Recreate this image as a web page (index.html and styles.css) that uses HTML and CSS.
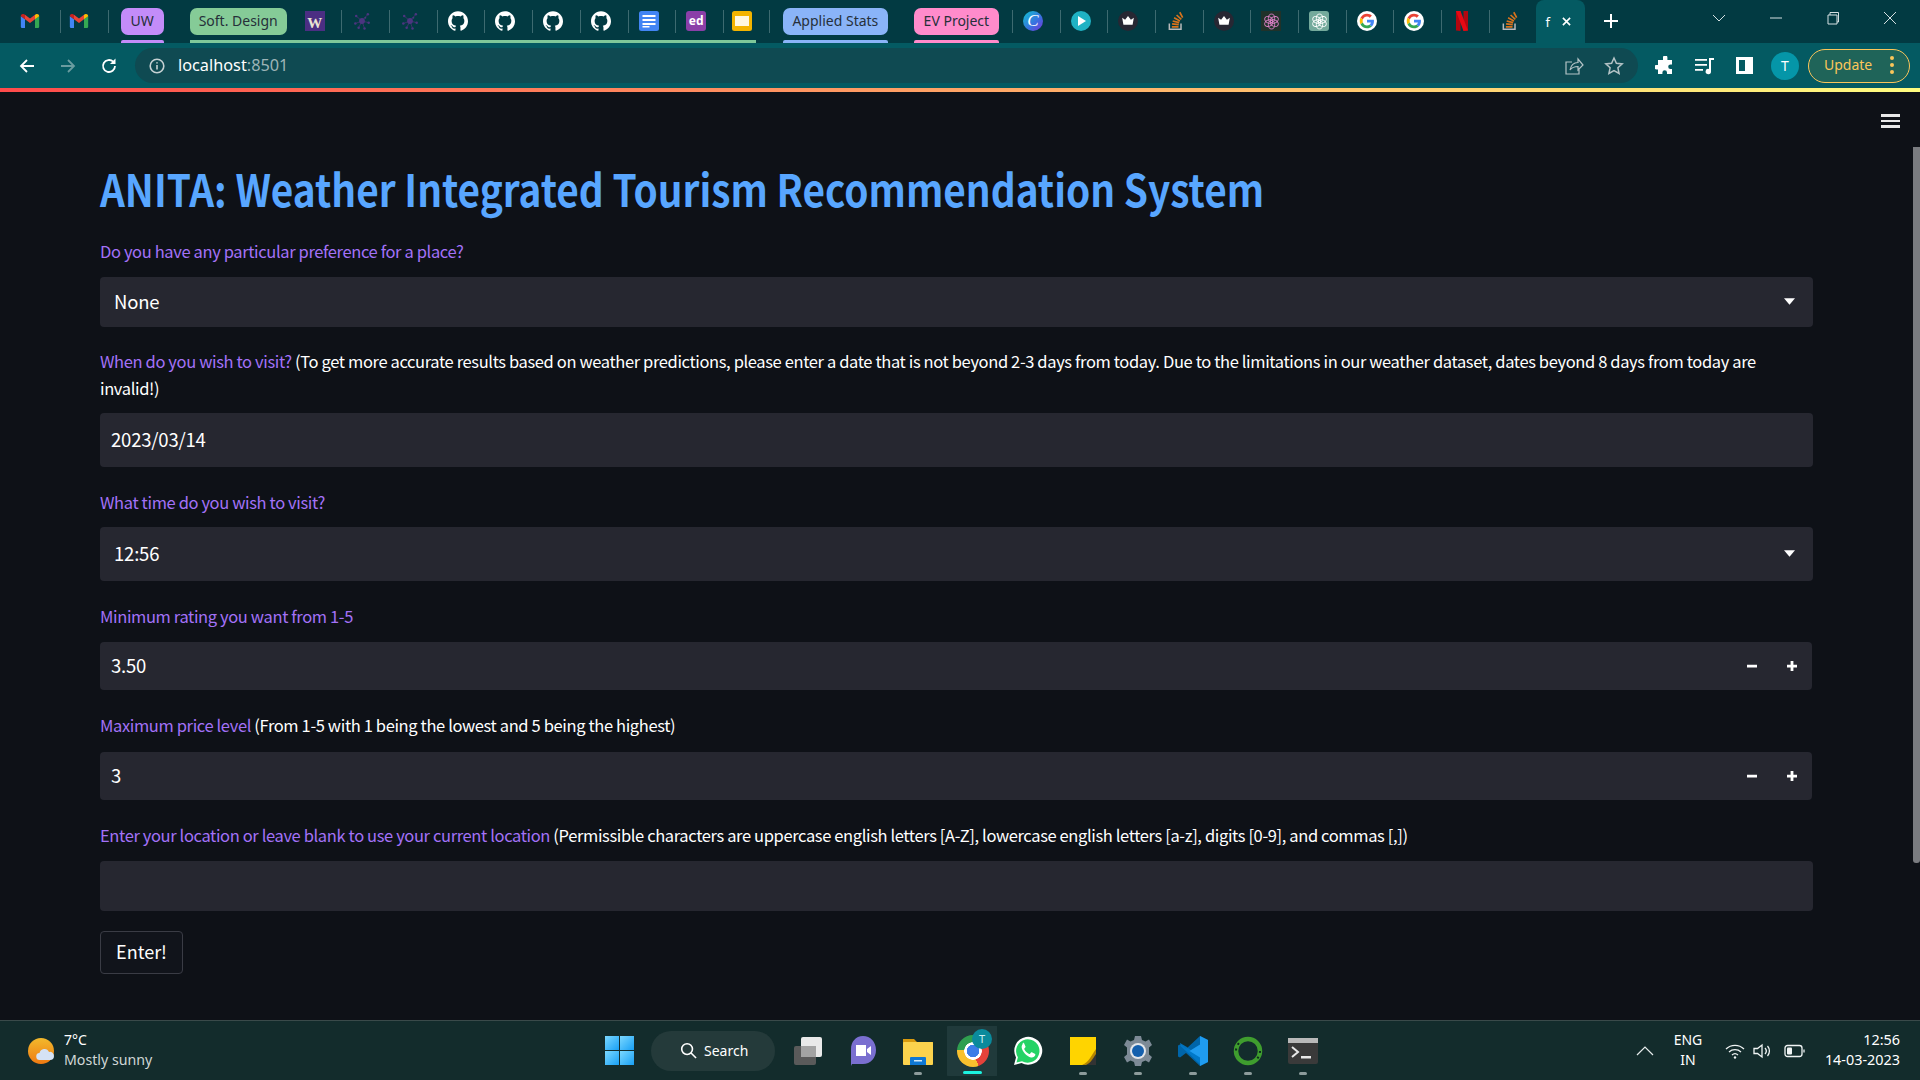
FILE: index.html
```html
<!DOCTYPE html>
<html lang="en">
<head>
    <meta charset="UTF-8">
    <title>ANITA</title>
    <link rel="stylesheet" href="styles.css">
</head>
<body>
    <svg class="defs" width="0" height="0">
        <symbol id="gmail" viewBox="0 0 24 24">
            <path fill="#4285f4" d="M1 6v13a1.500 1.500 0 0 0 1.500 1.500H6V10z"/>
            <path fill="#34a853" d="M23 6v13a1.500 1.500 0 0 1-1.500 1.500H18V10z"/>
            <path fill="#ea4335" d="M6 10l6 4.500L18 10V4.500l-6 4.500L6 4.500z"/>
            <path fill="#fbbc04" d="M18 4.500V10l5-3.700V6c0-2-2.300-3.100-3.800-2z"/>
            <path fill="#c5221f" d="M6 4.500V10L1 6.300V6c0-2 2.300-3.100 3.800-2z"/>
        </symbol>
        <symbol id="github" viewBox="0 0 24 24">
            <path fill="#fff" d="M12 .297c-6.630 0-12 5.373-12 12 0 5.303 3.438 9.800 8.205 11.385.6.113.82-.258.82-.577 0-.285-.01-1.040-.015-2.040-3.338.724-4.042-1.610-4.042-1.610C4.422 18.070 3.633 17.700 3.633 17.700c-1.087-.744.084-.729.084-.729 1.205.084 1.838 1.236 1.838 1.236 1.070 1.835 2.809 1.305 3.495.998.108-.776.417-1.305.76-1.605-2.665-.3-5.466-1.332-5.466-5.930 0-1.310.465-2.380 1.235-3.220-.135-.303-.54-1.523.105-3.176 0 0 1.005-.322 3.300 1.230.96-.267 1.980-.399 3-.405 1.020.006 2.040.138 3 .405 2.280-1.552 3.285-1.230 3.285-1.230.645 1.653.24 2.873.12 3.176.765.84 1.230 1.910 1.230 3.220 0 4.610-2.805 5.625-5.475 5.920.42.36.81 1.096.81 2.220 0 1.606-.015 2.896-.015 3.286 0 .315.21.69.825.57C20.565 22.092 24 17.592 24 12.297c0-6.627-5.373-12-12-12"/>
        </symbol>
        <symbol id="google" viewBox="-9 -9 66 66">
            <circle cx="24" cy="24" r="33" fill="#fff"/>
            <path fill="#ea4335" d="M24 9.500c3.540 0 6.710 1.220 9.210 3.600l6.850-6.850C35.900 2.380 30.470 0 24 0 14.620 0 6.510 5.380 2.560 13.220l7.980 6.190C12.430 13.720 17.740 9.500 24 9.500z"/>
            <path fill="#4285f4" d="M46.980 24.550c0-1.570-.15-3.090-.38-4.550H24v9.020h12.940c-.58 2.960-2.260 5.480-4.780 7.180l7.730 6c4.510-4.180 7.090-10.360 7.090-17.650z"/>
            <path fill="#fbbc05" d="M10.530 28.590c-.48-1.450-.76-2.990-.76-4.590s.27-3.140.76-4.590l-7.980-6.190C.92 16.460 0 20.120 0 24c0 3.880.92 7.540 2.560 10.780l7.970-6.190z"/>
            <path fill="#34a853" d="M24 48c6.480 0 11.930-2.130 15.890-5.810l-7.730-6c-2.150 1.450-4.920 2.300-8.160 2.300-6.260 0-11.570-4.220-13.470-9.910l-7.980 6.190C6.510 42.620 14.620 48 24 48z"/>
        </symbol>
        <symbol id="crown" viewBox="0 0 24 24">
            <circle cx="12" cy="12" r="12" fill="#272733"/>
            <path fill="#fff" d="M5 8l3.500 2.500L12 6l3.500 4.500L19 8l-1.500 8.500h-11z"/>
        </symbol>
        <symbol id="stack" viewBox="0 0 24 24">
            <path fill="none" stroke="#b9babb" stroke-width="1.800" d="M4 15v7h14v-7"/>
            <path fill="none" stroke="#d9731c" stroke-width="2" d="M7 19h8M7.300 15.500l8 .9M8 12l7.800 2M9.700 8.200l7 3.700M12.700 4.800l5.700 5.200M16.500 1.500l3.500 6.500"/>
        </symbol>
        <symbol id="sparkle" viewBox="0 0 24 24">
            <g fill="none" stroke="#44306f" stroke-width="1">
                <path d="M12 12L5 6M12 12l7-8M12 12l8 2M12 12l-8 3M12 12l3 9M12 12l-4 8"/>
            </g>
            <g fill="#4b3580">
                <circle cx="12" cy="12" r="3.500"/><circle cx="5" cy="6" r="1.500"/><circle cx="19" cy="4" r="1.500"/><circle cx="20" cy="14" r="1.500"/><circle cx="4" cy="15" r="1.500"/><circle cx="15" cy="21" r="1.500"/><circle cx="8" cy="20" r="1.500"/><circle cx="16" cy="8" r="1.200"/>
            </g>
        </symbol>
        <symbol id="knot" viewBox="0 0 24 24">
            <g fill="none" stroke="currentColor" stroke-width="1.300">
                <ellipse cx="12" cy="7.500" rx="4.500" ry="6"/>
                <ellipse cx="12" cy="7.500" rx="4.500" ry="6" transform="rotate(60 12 12)"/>
                <ellipse cx="12" cy="7.500" rx="4.500" ry="6" transform="rotate(120 12 12)"/>
                <ellipse cx="12" cy="7.500" rx="4.500" ry="6" transform="rotate(180 12 12)"/>
                <ellipse cx="12" cy="7.500" rx="4.500" ry="6" transform="rotate(240 12 12)"/>
                <ellipse cx="12" cy="7.500" rx="4.500" ry="6" transform="rotate(300 12 12)"/>
            </g>
        </symbol>
        <symbol id="caret" viewBox="0 0 12 8">
            <path fill="#fff" d="M0 0h12L6 7z"/>
        </symbol>
        <symbol id="stepper" viewBox="0 0 52 12">
            <path fill="#fff" d="M0 4.800h10v2.800H0zM40 4.800h10v2.800H40zM43.600 1h2.800v10h-2.800z"/>
        </symbol>
    </svg>

    <div class="tabstrip">
        <div class="fav fav-first"><svg class="ico"><use href="#gmail"/></svg></div><i class="sep"></i>
        <div class="fav fav-second"><svg class="ico"><use href="#gmail"/></svg></div><i class="sep"></i>
        <div class="chip chip-uw">UW</div>
        <div class="tabgroup">
            <div class="chip chip-soft">Soft. Design</div>
            <div class="fav"><span class="ico w-icon">W</span></div><i class="sep"></i>
            <div class="fav"><svg class="ico"><use href="#sparkle"/></svg></div><i class="sep"></i>
            <div class="fav"><svg class="ico"><use href="#sparkle"/></svg></div><i class="sep"></i>
            <div class="fav"><svg class="ico"><use href="#github"/></svg></div><i class="sep"></i>
            <div class="fav"><svg class="ico"><use href="#github"/></svg></div><i class="sep"></i>
            <div class="fav"><svg class="ico"><use href="#github"/></svg></div><i class="sep"></i>
            <div class="fav"><svg class="ico"><use href="#github"/></svg></div><i class="sep"></i>
            <div class="fav">
                <svg class="ico" viewBox="0 0 20 20">
                    <rect width="20" height="20" rx="2.500" fill="#4285f4"/>
                    <path fill="#fff" d="M3.500 4h13v2h-13zM3.500 8h13v2h-13zM3.500 12h13v2h-13zM3.500 15h7v1.500h-7z"/>
                </svg>
            </div><i class="sep"></i>
            <div class="fav"><span class="ico ed-icon">ed</span></div><i class="sep"></i>
            <div class="fav fav-end">
                <svg class="ico" viewBox="0 0 20 20">
                    <rect width="20" height="20" rx="2.500" fill="#f4b400"/>
                    <rect x="3" y="5" width="14" height="10" fill="#fff7e0"/>
                </svg>
            </div>
        </div>
        <i class="sep sep-after"></i>
        <div class="chip chip-stats">Applied Stats</div>
        <div class="chip chip-ev">EV Project</div>
        <i class="sep"></i>
        <div class="fav"><span class="ico canva-icon">C</span></div><i class="sep"></i>
        <div class="fav">
            <svg class="ico" viewBox="0 0 20 20">
                <circle cx="10" cy="10" r="10" fill="#1fb2c4"/>
                <path fill="#fff" d="M7 5l8 5-8 5z"/>
            </svg>
        </div><i class="sep"></i>
        <div class="fav"><svg class="ico"><use href="#crown"/></svg></div><i class="sep"></i>
        <div class="fav"><svg class="ico"><use href="#stack"/></svg></div><i class="sep"></i>
        <div class="fav"><svg class="ico"><use href="#crown"/></svg></div><i class="sep"></i>
        <div class="fav"><span class="ico knot-dark"><svg class="knot"><use href="#knot"/></svg></span></div><i class="sep"></i>
        <div class="fav"><span class="ico knot-green"><svg class="knot"><use href="#knot"/></svg></span></div><i class="sep"></i>
        <div class="fav"><svg class="ico"><use href="#google"/></svg></div><i class="sep"></i>
        <div class="fav"><svg class="ico"><use href="#google"/></svg></div><i class="sep"></i>
        <div class="fav">
            <svg class="ico" viewBox="0 0 20 20">
                <path fill="#b20710" d="M4 0h4.500v20L4 19.400z"/>
                <path fill="#b20710" d="M11.500 0H16v19.400L11.500 20z"/>
                <path fill="#e50914" d="M4 0h4.500l7.500 19.400L11.500 20z"/>
            </svg>
        </div><i class="sep"></i>
        <div class="fav"><svg class="ico"><use href="#stack"/></svg></div>
        <div class="tab-active">
            <span class="tab-title">f</span>
            <svg class="tab-x" viewBox="0 0 10 10"><path d="M1 1l8 8M9 1l-8 8"/></svg>
        </div>
        <svg class="newtab" viewBox="0 0 14 14"><path d="M7 0v14M0 7h14"/></svg>
        <div class="wincontrols">
            <svg class="winbtn" viewBox="0 0 14 14"><path d="M1 4l6 6 6-6"/></svg>
            <svg class="winbtn" viewBox="0 0 14 14"><path d="M1 7h12"/></svg>
            <svg class="winbtn" viewBox="0 0 14 14"><path d="M2 4h9v9H2zM4 4V1.500h8.500V11H11"/></svg>
            <svg class="winbtn" viewBox="0 0 14 14"><path d="M1 1l12 12M13 1L1 13"/></svg>
        </div>
    </div>

    <div class="toolbar">
        <svg class="navbtn" viewBox="0 0 18 18"><path d="M16 9H3M9 3L3 9l6 6"/></svg>
        <svg class="navbtn navbtn-off" viewBox="0 0 18 18"><path d="M2 9h13M9 3l6 6-6 6"/></svg>
        <svg class="navbtn" viewBox="0 0 18 18"><path d="M15 9a6 6 0 1 1-1.800-4.300"/><path class="navfill" d="M15.500 1.500v5.500H10z"/></svg>
        <div class="omnibox">
            <svg class="info" viewBox="0 0 16 16">
                <circle cx="8" cy="8" r="6.800"/><path d="M8 7v4.500M8 4.200v1.400"/>
            </svg>
            <span class="url">localhost<span class="url-port">:8501</span></span>
            <svg class="omni-icon share" viewBox="0 0 20 20"><path d="M8 6H2v12h13v-5M6 14c1-5 4-7.500 8-7.500V3l5 6-5 5v-3.500c-3.500 0-6 1-8 3.500z"/></svg>
            <svg class="omni-icon" viewBox="0 0 20 20"><path d="M10 2l2.400 5.300 5.800.6-4.300 3.900 1.200 5.700-5.100-2.900-5.100 2.900 1.200-5.700L1.800 7.900l5.800-.6z"/></svg>
        </div>
        <svg class="ext puzzle" viewBox="0 0 20 20"><path fill="#fff" d="M8 1.500a2.200 2.200 0 0 1 4.400 0V4H17v4.500h-1.500a2.300 2.300 0 0 0 0 4.600H17V18h-5v-1.500a2.300 2.300 0 0 0-4.600 0V18H3v-4.500H1.500a2.300 2.300 0 0 1 0-4.600H3V4h5z"/></svg>
        <svg class="ext media" viewBox="0 0 20 20"><path fill="#fff" d="M1 3h12v1.800H1zM1 8h12v1.800H1zM1 13h8v1.800H1zM15 2h5v2h-3v11.500a2.700 2.700 0 1 1-2-2.600z"/></svg>
        <div class="sidepanel"></div>
        <div class="avatar">T</div>
        <div class="update"><span>Update</span><span class="dots"><i></i><i></i><i></i></span></div>
    </div>
    <div class="rainbow"></div>

    <main class="app">
        <div class="hamburger"><i></i><i></i><i></i></div>
        <div class="scrollthumb"></div>

        <h1 class="title">ANITA: Weather Integrated Tourism Recommendation System</h1>

        <div class="field field-first">
            <p class="label"><span class="hl">Do you have any particular preference for a place?</span></p>
            <div class="box box-select"><span>None</span><svg class="caret"><use href="#caret"/></svg></div>
        </div>
        <div class="field">
            <p class="label label-tight label-wrap"><span class="hl">When do you wish to visit?</span> (To get more accurate results based on weather predictions, please enter a date that is not beyond 2-3 days from today. Due to the limitations in our weather dataset, dates beyond 8 days from today are invalid!)</p>
            <div class="box box-input box-tall"><span>2023/03/14</span></div>
        </div>
        <div class="field">
            <p class="label label-tight"><span class="hl">What time do you wish to visit?</span></p>
            <div class="box box-select box-tall"><span>12:56</span><svg class="caret"><use href="#caret"/></svg></div>
        </div>
        <div class="field">
            <p class="label"><span class="hl">Minimum rating you want from 1-5</span></p>
            <div class="box box-input box-num"><span>3.50</span><svg class="stepper"><use href="#stepper"/></svg></div>
        </div>
        <div class="field">
            <p class="label label-wide"><span class="hl">Maximum price level</span> (From 1-5 with 1 being the lowest and 5 being the highest)</p>
            <div class="box box-input box-num"><span>3</span><svg class="stepper"><use href="#stepper"/></svg></div>
        </div>
        <div class="field field-last">
            <p class="label"><span class="hl">Enter your location or leave blank to use your current location</span> (Permissible characters are uppercase english letters [A-Z], lowercase english letters [a-z], digits [0-9], and commas [,])</p>
            <div class="box box-input"></div>
        </div>
        <button class="enter" type="button">Enter!</button>
    </main>

    <footer class="taskbar">
        <div class="weather">
            <svg class="weather-icon" viewBox="0 0 30 30">
                <defs><linearGradient id="sun" x1="0" y1="0" x2="0" y2="1"><stop offset="0" stop-color="#f2b92c"/><stop offset="1" stop-color="#ef7a12"/></linearGradient></defs>
                <circle cx="13" cy="15" r="13" fill="url(#sun)"/>
                <path fill="#d5e2f5" d="M12 24a3.500 3.500 0 0 1-.5-7 5 5 0 0 1 9.500-1 4 4 0 0 1 5 4 4 4 0 0 1-4 4z"/>
            </svg>
            <div class="weather-text">
                <div class="temp">7°C</div>
                <div class="cond">Mostly sunny</div>
            </div>
        </div>

        <div class="dock">
            <div class="winlogo"><i></i><i></i><i></i><i></i></div>
            <div class="search">
                <svg class="search-ico" viewBox="0 0 18 18"><circle cx="7.500" cy="7.500" r="5.700"/><path d="M11.700 11.700L17 17"/></svg>
                <span>Search</span>
            </div>
            <div class="app-ico">
                <svg viewBox="0 0 32 32"><rect x="2" y="11" width="22" height="19" rx="2" fill="#5a5a5a"/><rect x="9" y="2" width="21" height="20" rx="2" fill="#e9e9e9"/><rect x="9" y="11" width="15" height="11" fill="#a3a3a3"/></svg>
            </div>
            <div class="app-ico">
                <svg viewBox="0 0 32 32"><path fill="#7a6fd0" d="M16 1c7.500 0 13 6 13 14s-5.500 14-13 14H5l-1 2v-17C4 7 8.500 1 16 1z"/><path fill="#fff" d="M9 10h10v11H9zM20 14l4-3v9l-4-3z"/></svg>
            </div>
            <div class="app-ico is-open">
                <svg viewBox="0 0 32 32"><path fill="#d99a0e" d="M1 4h11l3 3h16v6H1z"/><rect x="1" y="7" width="30" height="23" rx="1" fill="#fcd34d"/><path fill="#0f78d4" d="M9 22h14a1 1 0 0 1 1 1v7H8v-7a1 1 0 0 1 1-1z"/><path fill="#cfe8fa" d="M12 25h8v1.500h-8z"/></svg>
            </div>
            <div class="app-ico is-active">
                <div class="chrome"></div>
                <span class="chrome-badge">T</span>
            </div>
            <div class="app-ico">
                <svg viewBox="0 0 32 32"><path fill="#fff" d="M2 30l2-7.500A14 14 0 1 1 9.500 28z"/><path fill="#25d366" d="M4.500 27.500l1.400-5.200A11.700 11.700 0 1 1 10 26.200z"/><path fill="#fff" d="M11.500 8.500c-1 .5-2.200 2-1.800 4.200.7 4 5 8.700 9.300 9.700 2.200.4 3.800-1 4.200-2.200.2-.6.200-1.100 0-1.300l-3.300-1.700c-.4-.1-.6 0-.9.300l-1 1.300c-.3.300-.5.300-.9.100-2.200-1-3.800-2.500-4.800-4.600-.2-.4-.1-.6.100-.8l1-1.200c.2-.3.200-.5.100-.8l-1.400-3.300c-.2-.5-.7-.5-2.100.3z"/></svg>
            </div>
            <div class="app-ico is-open">
                <svg viewBox="0 0 32 32"><path fill="#ffd400" d="M3 2h26v28H3z"/><path fill="#b58600" d="M29 14v16H15c7-3 9-9 14-16z"/><path fill="#333" d="M29 19v11H19c5-2 7-7 10-11z"/></svg>
            </div>
            <div class="app-ico is-open">
                <svg viewBox="0 0 32 32"><path fill="#7d8a96" d="M13 1h6l1 4 3.500 1.500L27 4.500l3 5.500-3 2.500v7l3 2.500-3 5.500-3.500-2L20 27l-1 4h-6l-1-4-3.500-1.500-3.500 2-3-5.500 3-2.500v-7L2 10l3-5.500 3.500 2L12 5z"/><circle cx="16" cy="16" r="8" fill="#e3e6ea"/><circle cx="16" cy="16" r="6" fill="#1560ad"/></svg>
            </div>
            <div class="app-ico is-open">
                <svg viewBox="0 0 32 32"><path fill="#0065a9" d="M23 1l8 4v22l-8 4-14-13-6 4.500-2-1v-11l2-1L9 14z"/><path fill="#007acc" d="M3.500 11l20 18.500V22L9 11.500 3 8z" opacity=".9"/><path fill="#1f9cf0" d="M23 1l8 4v22l-8 4zM23 9.500L12.500 16 23 22.500z"/></svg>
            </div>
            <div class="app-ico is-open">
                <svg viewBox="0 0 32 32"><circle cx="16" cy="16" r="12" fill="none" stroke="#3f9d2e" stroke-width="4.500"/><circle cx="16" cy="16" r="12" fill="none" stroke="#0d2b1d" stroke-width="2" stroke-dasharray="2 4 2 30" /></svg>
            </div>
            <div class="app-ico is-open">
                <svg viewBox="0 0 32 32"><rect x="1" y="3" width="30" height="26" rx="2" fill="#3a3a3a"/><rect x="1" y="3" width="30" height="5" fill="#b9b9b9"/><path fill="none" stroke="#e8e8e8" stroke-width="2" d="M5 12l6 5-6 5"/><path fill="#e8e8e8" d="M14 21h10v2.500H14z"/></svg>
            </div>
        </div>

        <div class="tray">
            <svg class="tray-chev" viewBox="0 0 18 10"><path d="M1 9l8-8 8 8"/></svg>
            <div class="lang"><div>ENG</div><div>IN</div></div>
            <svg class="tray-ico" viewBox="0 0 20 16"><path d="M1 6a13 13 0 0 1 18 0M4 9a9 9 0 0 1 12 0M7 12a4.500 4.500 0 0 1 6 0"/><circle class="tray-fill" cx="10" cy="14.500" r="1.200"/></svg>
            <svg class="tray-ico tray-vol" viewBox="0 0 20 16"><path d="M1 5.500h3.500L9 2v12l-4.500-3.500H1zM12 5a4.500 4.500 0 0 1 0 6M14.500 3a7.500 7.500 0 0 1 0 10"/></svg>
            <svg class="tray-ico tray-bat" viewBox="0 0 22 14"><rect x="1" y="1.500" width="17" height="11" rx="2.500"/><rect class="tray-fill" x="3" y="3.500" width="5" height="7" rx="1"/><path d="M20 5.500v3"/></svg>
            <div class="clock"><div>12:56</div><div>14-03-2023</div></div>
        </div>
    </footer>
</body>
</html>
```

FILE: styles.css
```css
* {
    box-sizing: border-box;
}
html, body {
    height: 100%;
}
body {
    margin: 0;
    display: flex;
    flex-direction: column;
    height: 1080px;
    overflow: hidden;
    background: #0e1117;
    font-family: "Noto Sans", "Liberation Sans", sans-serif;
    color: #fff;
}
.defs {
    position: absolute;
}

/* browser tabs */
.tabstrip {
    display: flex;
    align-items: flex-start;
    height: 43px;
    flex: none;
    padding-left: 10px;
    background: #023a42;
}
.fav {
    width: 46.700px;
    height: 40px;
    flex: none;
    padding: 11px 6.700px 0 0;
    display: flex;
    justify-content: center;
}
.fav-first {
    width: 50px;
    padding-right: 10px;
}
.fav-second {
    padding-right: 10px;
}
.fav-end {
    width: 32px;
    padding: 11px 0 0 8px;
    justify-content: flex-start;
}
.ico {
    width: 20px;
    height: 20px;
    display: block;
    flex: none;
}
.sep {
    width: 1px;
    height: 23px;
    margin-top: 10px;
    flex: none;
    background: #3d6a70;
}
.sep-after {
    margin-left: 13px;
}
.tabgroup {
    display: flex;
    align-items: flex-start;
    height: 43px;
    margin-left: 26px;
    flex: none;
    border-bottom: 3px solid #7fc99a;
    border-radius: 3px 3px 0 0;
}
.chip {
    position: relative;
    height: 27px;
    margin-top: 8px;
    flex: none;
    border-radius: 7px;
    font-size: 14px;
    line-height: 26px;
    text-align: center;
    color: #26303a;
}
.chip-uw::after, .chip-stats::after, .chip-ev::after {
    content: "";
    position: absolute;
    left: 0;
    right: 0;
    bottom: -8px;
    height: 3px;
    border-radius: 2px 2px 0 0;
    background: inherit;
}
.chip-uw {
    width: 43px;
    margin-left: 12px;
    background: #c38cf9;
}
.chip-soft {
    width: 97px;
    margin-right: 8px;
    background: #85cb97;
}
.chip-stats {
    width: 105px;
    margin-left: 13px;
    background: #8ab4f8;
}
.chip-ev {
    width: 85px;
    margin-left: 26px;
    margin-right: 13px;
    background: #ff8bcb;
}
.w-icon {
    display: flex;
    align-items: flex-end;
    justify-content: center;
    background: #4b2e83;
    color: #e8e3d3;
    font: bold 15px/15px "Liberation Serif", serif;
}
.ed-icon {
    border-radius: 3px;
    background: #8a3fa8;
    font-size: 12px;
    font-weight: 700;
    line-height: 20px;
    text-align: center;
}
.canva-icon {
    border-radius: 50%;
    background: linear-gradient(135deg, #10c5cf, #3b6ee0 60%, #7a32d8);
    font: italic 17px/20px "Liberation Serif", serif;
    text-align: center;
}
.knot-dark, .knot-green {
    display: flex;
    align-items: center;
    justify-content: center;
}
.knot-dark {
    background: #20322a;
    color: #d97fc4;
}
.knot-green {
    border-radius: 3px;
    background: #74aa9c;
    color: #fff;
}
.knot {
    width: 17px;
    height: 17px;
}
.tab-active {
    display: flex;
    align-items: center;
    gap: 12px;
    width: 49px;
    height: 43px;
    padding-left: 9px;
    flex: none;
    border-radius: 8px 8px 0 0;
    background: #045a62;
}
.tab-title {
    font-size: 13px;
}
.tab-x {
    width: 9px;
    height: 9px;
    fill: none;
    stroke: #fff;
    stroke-width: 1.800;
}
.newtab {
    width: 14px;
    height: 14px;
    margin: 14px 0 0 19px;
    fill: none;
    stroke: #fff;
    stroke-width: 2;
}
.wincontrols {
    display: flex;
    gap: 43px;
    margin: 11px 0 0 94px;
}
.winbtn {
    width: 14px;
    height: 14px;
    fill: none;
    stroke: #d5e0e2;
    stroke-width: 1;
}

/* address bar */
.toolbar {
    display: flex;
    align-items: center;
    height: 45px;
    flex: none;
    padding-left: 18px;
    background: #045a62;
}
.navbtn {
    width: 18px;
    height: 18px;
    margin-right: 23px;
    flex: none;
    fill: none;
    stroke: #fff;
    stroke-width: 1.800;
}
.navbtn-off {
    stroke: #6a9ca0;
}
.navfill {
    fill: #fff;
    stroke: none;
}
.omnibox {
    display: flex;
    align-items: center;
    width: 1503px;
    height: 35px;
    margin-left: -6px;
    padding: 0 14px;
    flex: none;
    border-radius: 18px;
    background: #0f4a52;
}
.info {
    width: 16px;
    height: 16px;
    fill: none;
    stroke: #c5d1d3;
    stroke-width: 1.600;
}
.url {
    flex: 1;
    margin-left: 13px;
    padding-bottom: 2px;
    font-size: 16.300px;
}
.url-port {
    color: #9db4b7;
}
.omni-icon {
    width: 20px;
    height: 20px;
    margin-left: 20px;
    fill: none;
    stroke: #b4c3c6;
    stroke-width: 1.500;
}
.share {
    stroke-width: 1.200;
}
.ext {
    width: 20px;
    height: 20px;
    flex: none;
}
.puzzle {
    margin-left: 17px;
}
.media {
    margin-left: 19px;
}
.sidepanel {
    width: 17px;
    height: 17px;
    margin-left: 22px;
    flex: none;
    border: 3px solid #fff;
    background: linear-gradient(90deg, transparent 50%, #fff 50%);
}
.avatar {
    width: 28px;
    height: 28px;
    margin-left: 18px;
    flex: none;
    border-radius: 50%;
    background: #0596a8;
    font-size: 14px;
    line-height: 28px;
    text-align: center;
}
.update {
    display: flex;
    align-items: center;
    justify-content: space-between;
    width: 102px;
    height: 34px;
    margin-left: 9px;
    padding: 0 15px 2px 15px;
    flex: none;
    border: 1px solid #fbc65a;
    border-radius: 17px;
    background: #1f6459;
    color: #fbc65a;
    font-size: 14px;
}
.dots {
    display: flex;
    flex-direction: column;
    gap: 3px;
}
.dots i {
    width: 4px;
    height: 4px;
    border-radius: 50%;
    background: #fbc65a;
}
.rainbow {
    height: 4px;
    flex: none;
    background: linear-gradient(90deg, #ff4b4b, #fffd80);
}

/* streamlit page */
.app {
    position: relative;
    flex: 1;
    padding: 63px 107px 0 100px;
    background: #0e1117;
    font-family: "Noto Sans CJK SC", "Noto Sans", sans-serif;
}
.hamburger {
    position: absolute;
    top: 22px;
    right: 20px;
    display: flex;
    flex-direction: column;
    gap: 3px;
    width: 19px;
}
.hamburger i {
    height: 2.500px;
    background: #e8e8e8;
}
.scrollthumb {
    position: absolute;
    top: 55px;
    right: 0;
    width: 7px;
    height: 716px;
    border-radius: 0 0 3px 3px;
    background: #7a7c80;
}
.title {
    margin: 0 0 17px;
    white-space: nowrap;
    font-size: 44px;
    font-weight: 600;
    line-height: 66px;
    color: #58a6ff;
    transform: scaleX(.881);
    transform-origin: left center;
}
.field {
    margin-bottom: 22px;
}
.field-first {
    margin-bottom: 21px;
}
.field-last {
    margin-bottom: 20px;
}
.label {
    margin: 0 0 12px;
    font-size: 16.500px;
    letter-spacing: -.37px;
    line-height: 27px;
}
.label-tight {
    margin-bottom: 11px;
}
.label-wide {
    margin-bottom: 13px;
}
.label-wrap {
    padding-right: 20px;
}
.hl {
    color: #a371f7;
}
.box {
    display: flex;
    align-items: center;
    justify-content: space-between;
    height: 50px;
    padding-bottom: 3px;
    border-radius: 4px;
    background: #262730;
    font-size: 18.500px;
    letter-spacing: -.2px;
}
.box-select {
    padding-left: 14px;
    padding-right: 14px;
}
.box-input {
    padding-left: 11px;
    padding-right: 11px;
}
.box-tall {
    height: 54px;
}
.box-num {
    height: 48px;
    margin-right: 1px;
}
.caret {
    width: 11px;
    height: 8px;
    margin: 3px 4px 0 0;
}
.stepper {
    width: 52px;
    height: 12px;
    margin: 3px 2px 0 0;
}
.enter {
    display: block;
    width: 83px;
    height: 43px;
    padding: 0 0 3px;
    border: 1px solid #3a3c45;
    border-radius: 4px;
    background: #11141b;
    color: #fff;
    font: 18px "Noto Sans CJK SC", "Noto Sans", sans-serif;
}

/* windows taskbar */
.taskbar {
    display: flex;
    align-items: center;
    height: 60px;
    flex: none;
    border-top: 1px solid #3a4a4a;
    background: #132c2c;
}
.weather {
    display: flex;
    align-items: center;
    gap: 6px;
    width: 605px;
    padding-left: 28px;
}
.weather-icon {
    width: 30px;
    height: 30px;
}
.weather-text {
    padding-bottom: 2px;
}
.temp {
    font-size: 14px;
    line-height: 19px;
}
.cond {
    font-size: 14.200px;
    line-height: 21px;
    color: #d0d7d6;
}
.dock {
    display: flex;
    align-items: center;
}
.winlogo {
    display: grid;
    grid-template-columns: 14px 14px;
    grid-template-rows: 14px 14px;
    gap: 1px;
    width: 29px;
}
.winlogo i {
    background: linear-gradient(135deg, #7bd8ff, #18a0f5);
}
.search {
    display: flex;
    align-items: center;
    gap: 7px;
    width: 124px;
    height: 40px;
    margin: 0 5px 0 17px;
    padding-left: 29px;
    border-radius: 20px;
    background: #243a3a;
    font-size: 14px;
}
.search-ico {
    width: 17px;
    height: 17px;
    fill: none;
    stroke: #fff;
    stroke-width: 1.700;
}
.app-ico {
    position: relative;
    display: flex;
    align-items: center;
    justify-content: center;
    width: 55px;
    height: 50px;
    flex: none;
}
.app-ico svg {
    width: 32px;
    height: 32px;
}
.app-ico.is-open::after, .app-ico.is-active::after {
    content: "";
    position: absolute;
    bottom: 1px;
    left: 50%;
    width: 8px;
    height: 3px;
    margin-left: -4px;
    border-radius: 2px;
    background: #8d9b9b;
}
.app-ico.is-active {
    background: linear-gradient(90deg, transparent 2px, #203a3b 2px, #203a3b 52px, transparent 52px);
    border-radius: 4px;
}
.app-ico.is-active::after {
    bottom: 2px;
    width: 19px;
    margin-left: -10px;
    background: #1cf2e0;
}
.chrome {
    position: relative;
    width: 32px;
    height: 32px;
    border-radius: 50%;
    background: radial-gradient(circle, #3b7de8 0 6px, #fff 6.500px 8.500px, transparent 9px), conic-gradient(from 35deg, #e5423a 0 125deg, #f9c12e 125deg 240deg, #2f9f4f 240deg 360deg);
}
.chrome-badge {
    position: absolute;
    top: 3px;
    right: 8px;
    width: 20px;
    height: 20px;
    border-radius: 50%;
    background: #0a8a9c;
    font-size: 11px;
    line-height: 20px;
    text-align: center;
    color: #cdeff4;
}
.tray {
    display: flex;
    align-items: center;
    margin-left: auto;
    padding-right: 20px;
}
.tray-chev {
    width: 18px;
    height: 10px;
    fill: none;
    stroke: #e6ecec;
    stroke-width: 1.200;
}
.lang {
    width: 50px;
    margin-left: 9px;
    padding-bottom: 2px;
    font-size: 14px;
    line-height: 20px;
    text-align: center;
}
.tray-ico {
    width: 20px;
    height: 16px;
    margin-left: 12px;
    fill: none;
    stroke: #f0f4f4;
    stroke-width: 1.300;
}
.tray-vol {
    margin-left: 8px;
}
.tray-bat {
    width: 22px;
    margin-left: 11px;
}
.tray-fill {
    fill: #f0f4f4;
    stroke: none;
}
.clock {
    width: 94px;
    padding-bottom: 2px;
    font-size: 14.400px;
    line-height: 20px;
    text-align: right;
}
```
